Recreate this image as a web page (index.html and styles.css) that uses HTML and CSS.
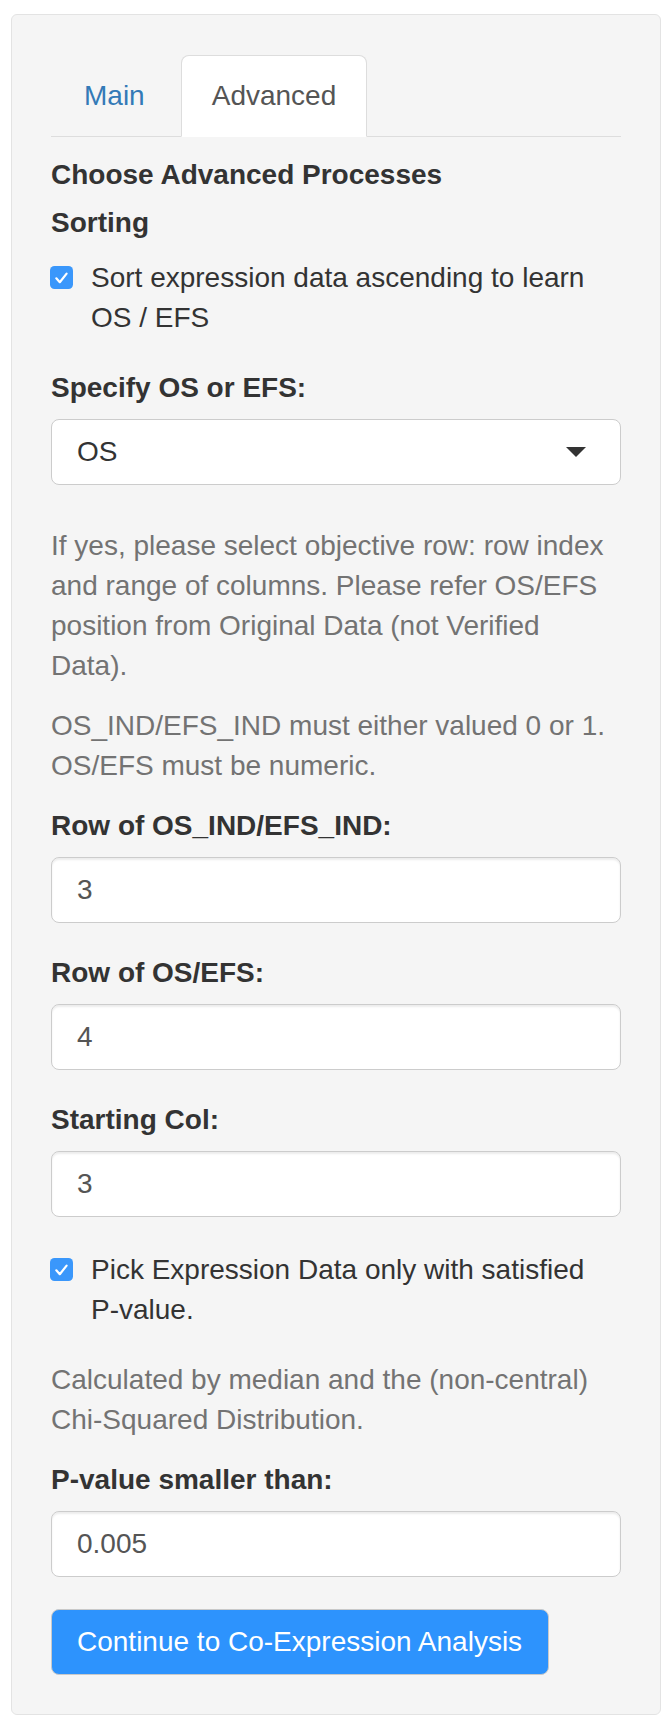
FILE: index.html
```html
<!DOCTYPE html>
<html lang="en">
<head>
<meta charset="utf-8">
<title>Advanced</title>
<link rel="stylesheet" href="styles.css">
</head>
<body>
<div class="well">
  <ul class="nav-tabs">
    <li class="tab"><a class="tab-link main-link">Main</a></li>
    <li class="tab"><a class="tab-link active">Advanced</a></li>
  </ul>
  <div class="tab-content">
    <h5 class="heading heading-first">Choose Advanced Processes</h5>
    <h5 class="heading heading-second">Sorting</h5>
    <div class="checkbox checkbox-first">
      <span class="check"><svg width="23" height="23" viewBox="0 0 23 23"><rect x="0" y="0" width="23" height="23" rx="4.5" fill="#3a97fb"/><path d="M6.3 12.3 L9.8 16.2 L16.6 7.6" fill="none" stroke="#fff" stroke-width="2.2" stroke-linecap="round" stroke-linejoin="round"/></svg></span>
      <span class="check-text">Sort expression data ascending to learn OS / EFS</span>
    </div>
    <div class="form-group fg-select">
      <label class="control-label">Specify OS or EFS:</label>
      <div class="select">
        <span class="select-value">OS</span>
        <span class="caret"></span>
      </div>
    </div>
    <p class="help help-first">If yes, please select objective row: row index and range of columns. Please refer OS/EFS position from Original Data (not Verified Data).</p>
    <p class="help help-second">OS_IND/EFS_IND must either valued 0 or 1. OS/EFS must be numeric.</p>
    <div class="form-group fg-first">
      <label class="control-label">Row of OS_IND/EFS_IND:</label>
      <div class="input">3</div>
    </div>
    <div class="form-group">
      <label class="control-label">Row of OS/EFS:</label>
      <div class="input">4</div>
    </div>
    <div class="form-group">
      <label class="control-label">Starting Col:</label>
      <div class="input">3</div>
    </div>
    <div class="checkbox checkbox-second">
      <span class="check"><svg width="23" height="23" viewBox="0 0 23 23"><rect x="0" y="0" width="23" height="23" rx="4.5" fill="#3a97fb"/><path d="M6.3 12.3 L9.8 16.2 L16.6 7.6" fill="none" stroke="#fff" stroke-width="2.2" stroke-linecap="round" stroke-linejoin="round"/></svg></span>
      <span class="check-text">Pick Expression Data only with satisfied <span class="nowrap">P-value.</span></span>
    </div>
    <p class="help help-third">Calculated by median and the (non-central) Chi-Squared Distribution.</p>
    <div class="form-group fg-last">
      <label class="control-label">P-value smaller than:</label>
      <div class="input">0.005</div>
    </div>
    <button class="btn">Continue to Co-Expression Analysis</button>
  </div>
</div>
</body>
</html>
```

FILE: styles.css
```css
html, body {
  margin: 0;
  padding: 0;
  background: #ffffff;
}

body {
  font-family: "Liberation Sans", Arial, Helvetica, sans-serif;
  font-size: 28px;
  line-height: 40px;
  color: #333333;
}

.well {
  box-sizing: border-box;
  width: 650px;
  margin: 14px 0 0 11px;
  padding: 40px 39px 39px 39px;
  background: #f5f5f5;
  border: 1px solid #e3e3e3;
  border-radius: 6px;
}

.nav-tabs {
  display: flex;
  margin: 0;
  padding: 0;
  list-style: none;
  border-bottom: 1px solid #dddddd;
}

.tab {
  margin-bottom: -1px;
}

.tab-link {
  display: block;
  padding: 20px 30px;
  line-height: 40px;
  border: 1px solid transparent;
  border-radius: 8px 8px 0 0;
  color: #555555;
}

.main-link {
  color: #337ab7;
  padding-left: 32px;
  margin-right: 5px;
}

.tab-link.active {
  background: #ffffff;
  border-color: #dddddd;
  border-bottom-color: transparent;
}

.heading {
  margin: 0;
  font-size: 28px;
  font-weight: bold;
  line-height: 40px;
}

.heading-first {
  margin-top: 18px;
}

.heading-second {
  margin-top: 8px;
}

.checkbox {
  display: flex;
  align-items: flex-start;
}

.checkbox-first {
  margin-top: 15px;
}

.checkbox-second {
  margin-top: 33px;
}

.check {
  flex: none;
  width: 23px;
  height: 23px;
  margin-top: 8px;
  margin-left: -1px;
}

.check svg {
  display: block;
}

.check-text {
  flex: 1;
  margin-left: 18px;
}

.nowrap {
  white-space: nowrap;
}

.form-group {
  margin-top: 30px;
}

.fg-first {
  margin-top: 20px;
}

.fg-last {
  margin-top: 20px;
}

.control-label {
  display: block;
  font-weight: bold;
  margin-bottom: 11px;
}

.select,
.input {
  box-sizing: border-box;
  height: 66px;
  width: 570px;
  padding: 0 25px;
  background: #ffffff;
  border: 1px solid #cccccc;
  border-radius: 8px;
  box-shadow: inset 0 2px 2px rgba(0, 0, 0, 0.075);
  display: flex;
  align-items: center;
  color: #555555;
}

.select {
  justify-content: space-between;
  color: #333333;
  box-shadow: none;
  padding-right: 34px;
}

.caret {
  width: 0;
  height: 0;
  border-left: 10px solid transparent;
  border-right: 10px solid transparent;
  border-top: 10px solid #333333;
}

.help {
  margin: 0;
  color: #737373;
}

.help-first {
  margin-top: 41px;
}

.help-second {
  margin-top: 20px;
}

.help-third {
  margin-top: 30px;
}

.btn {
  display: block;
  margin-top: 32px;
  height: 66px;
  padding: 0 26px 0 25px;
  font-family: "Liberation Sans", Arial, Helvetica, sans-serif;
  font-size: 28px;
  line-height: 40px;
  color: #ffffff;
  background: #2d93fd;
  border: 1px solid #c9c9c9;
  border-radius: 8px;
}
```
